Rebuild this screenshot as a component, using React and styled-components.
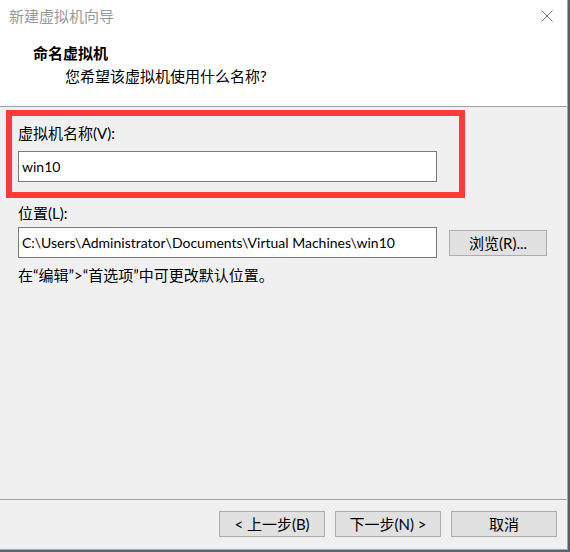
import React from 'react';
import styled, { createGlobalStyle } from 'styled-components';

const GlobalStyle = createGlobalStyle`
  html, body {
    margin: 0;
    padding: 0;
    background: #5a6470;
  }
  body {
    font-family: Lato, "Noto Sans CJK SC", sans-serif;
    font-size: 15px;
    color: #000;
  }
`

const Window = styled.div`
  width: 567px;
  height: 549px;
  border-right: 1px solid #a8a8a8;
  border-bottom: 1px solid #a8a8a8;
  background: #f0f0f0;
  display: flex;
  flex-direction: column;
  box-shadow: 0 2px 2px rgba(0, 0, 0, 0.25);
`

const Header = styled.div`
  background: #fff;
  height: 107px;
  border-bottom: 1px solid #a0a0a0;
  box-sizing: border-box;
  flex-shrink: 0;
`

const TitleBar = styled.div`
  height: 32px;
  display: flex;
  align-items: center;
  justify-content: space-between;
  padding: 0 14px 0 9px;
  color: #999;
  line-height: 20px;
`

const CloseIcon = styled.svg`
  width: 12px;
  height: 12px;
`

const PageTitle = styled.div`
  font-weight: 700;
  margin: 11px 0 0 33px;
  line-height: 20px;
`

const PageSubtitle = styled.div`
  margin: 3px 0 0 65px;
  line-height: 20px;
`

const Body = styled.div`
  flex: 1;
  display: flex;
  flex-direction: column;
  padding: 3px 0 0 6px;
`

const Highlight = styled.div`
  width: 459px;
  border: 6px solid #fe3a3a;
  box-sizing: border-box;
  padding: 7px 22px 10px 6px;
  display: flex;
  flex-direction: column;
  gap: 8px;
`

const Label = styled.div`
  line-height: 20px;
`

const Field = styled.div`
  display: flex;
  flex-direction: column;
  gap: 4px;
  padding: 5px 0 0 12px;
`

const Row = styled.div`
  display: flex;
  align-items: center;
  gap: 12px;
`

const Input = styled.div`
  width: 419px;
  height: 31px;
  box-sizing: border-box;
  border: 1px solid #7a7a7a;
  background: #fff;
  padding: 0 3px;
  display: flex;
  align-items: center;
  white-space: nowrap;
  overflow: hidden;
  font-size: 14px;
  line-height: 20px;
  flex-shrink: 0;
`

const Hint = styled.div`
  line-height: 20px;
  padding: 7px 0 0 12px;
`

const Footer = styled.div`
  margin-top: auto;
  border-top: 1px solid #a0a0a0;
  height: 50px;
  display: flex;
  justify-content: flex-end;
  align-items: flex-start;
  gap: 10px;
  padding: 11px 10px 0 0;
  box-sizing: border-box;
  margin-left: -6px;
`

const Button = styled.div`
  width: ${p => p.$w || 106}px;
  height: 26px;
  box-sizing: border-box;
  border: 1px solid #adadad;
  background: #e1e1e1;
  display: flex;
  align-items: center;
  justify-content: center;
  line-height: 20px;
  white-space: nowrap;
`

export default function App() {
  return (
    <>
      <GlobalStyle />
      <Window>
        <Header>
          <TitleBar>
            <span>新建虚拟机向导</span>
            <CloseIcon viewBox="0 0 12 12">
              <path d="M0.5 0.5 L11.5 11.5 M11.5 0.5 L0.5 11.5" stroke="#777" strokeWidth="1" fill="none" />
            </CloseIcon>
          </TitleBar>
          <PageTitle>命名虚拟机</PageTitle>
          <PageSubtitle>您希望该虚拟机使用什么名称?</PageSubtitle>
        </Header>
        <Body>
          <Highlight>
            <Label>虚拟机名称(V):</Label>
            <Input>win10</Input>
          </Highlight>
          <Field>
            <Label>位置(L):</Label>
            <Row>
              <Input>C:\Users\Administrator\Documents\Virtual Machines\win10</Input>
              <Button $w={98}>浏览(R)...</Button>
            </Row>
          </Field>
          <Hint>在“编辑”&gt;“首选项”中可更改默认位置。</Hint>
          <Footer>
            <Button>&lt; 上一步(B)</Button>
            <Button>下一步(N) &gt;</Button>
            <Button>取消</Button>
          </Footer>
        </Body>
      </Window>
    </>
  );
}
